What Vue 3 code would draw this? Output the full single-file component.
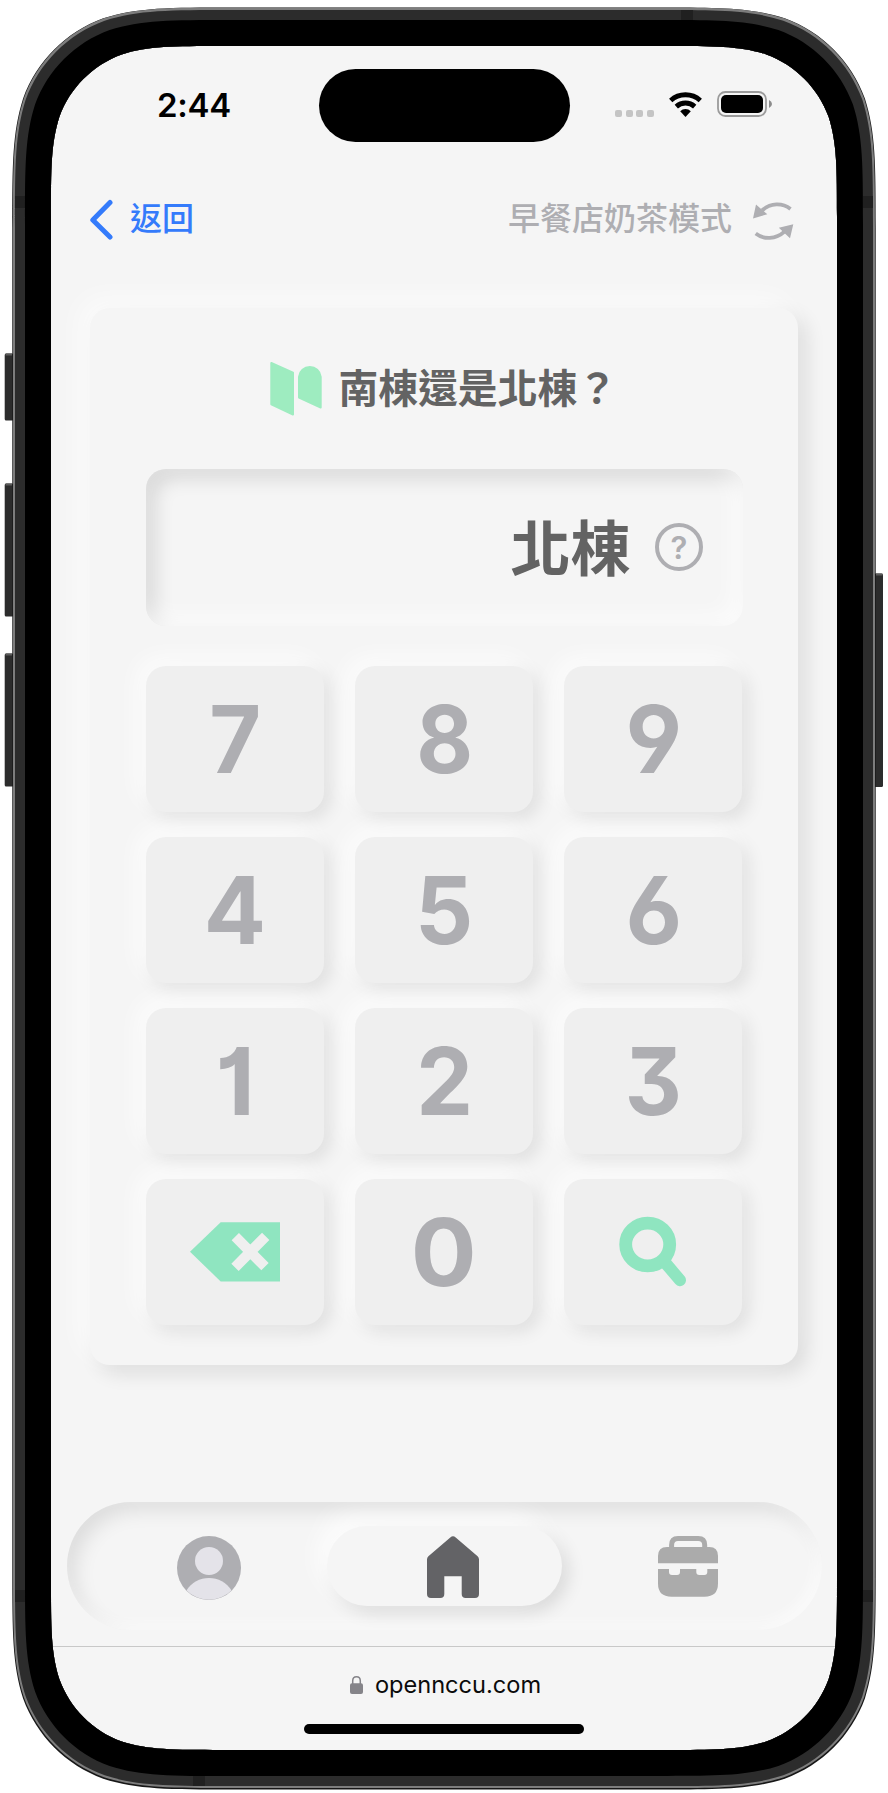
<script setup>
const keys = [
  { label: '7', stretch: 0.95 }, { label: '8', stretch: 0.93 }, { label: '9', stretch: 0.98 },
  { label: '4', stretch: 0.98 }, { label: '5', stretch: 0.97 }, { label: '6', stretch: 0.98 },
  { label: '1', stretch: 1 }, { label: '2', stretch: 0.96 }, { label: '3', stretch: 0.94 },
  { icon: 'erase' }, { label: '0', stretch: 1.04 }, { icon: 'search' },
]

// Continuous-curvature rounded rectangle
function squircle(x, y, w, h, r) {
  const a = 1.52866 * r, b = 1.08849 * r, c = 0.86841 * r, d = 0.63149 * r
  const e = 0.07491 * r, f = 0.37282 * r, g = 0.16906 * r
  const X = x + w, Y = y + h
  return `M${x + a} ${y}L${X - a} ${y}` +
    `C${X - b} ${y} ${X - c} ${y} ${X - d} ${y + e}C${X - f} ${y + g} ${X - g} ${y + f} ${X - e} ${y + d}C${X} ${y + c} ${X} ${y + b} ${X} ${y + a}` +
    `L${X} ${Y - a}C${X} ${Y - b} ${X} ${Y - c} ${X - e} ${Y - d}C${X - g} ${Y - f} ${X - f} ${Y - g} ${X - d} ${Y - e}C${X - c} ${Y} ${X - b} ${Y} ${X - a} ${Y}` +
    `L${x + a} ${Y}C${x + b} ${Y} ${x + c} ${Y} ${x + d} ${Y - e}C${x + f} ${Y - g} ${x + g} ${Y - f} ${x + e} ${Y - d}C${x} ${Y - c} ${x} ${Y - b} ${x} ${Y - a}` +
    `L${x} ${y + a}C${x} ${y + b} ${x} ${y + c} ${x + e} ${y + d}C${x + g} ${y + f} ${x + f} ${y + g} ${x + d} ${y + e}C${x + c} ${y} ${x + b} ${y} ${x + a} ${y}Z`
}
const hole = squircle(51, 46, 786, 1704, 112)
const black = squircle(25, 20, 838, 1756, 134)
const band = squircle(15, 10, 858, 1776, 142)
const rim = squircle(13, 7.5, 862, 1780.5, 144)
const edge = squircle(12.3, 7.5, 863.4, 1782, 144)
</script>

<template>
  <div class="stage">
    <main class="screen">
      <header class="status">
        <span class="time">2:44</span>
        <span class="island"></span>
        <span class="signals">
          <span class="dots"><i></i><i></i><i></i><i></i></span>
          <svg class="wifi" width="33" height="25" viewBox="0 0 33 25">
            <g fill="none" stroke="#000" stroke-width="4.9">
              <path d="M1.7 8.5A22 22 0 0 1 31.3 8.5" />
              <path d="M7.3 14.6A13.7 13.7 0 0 1 25.7 14.6" />
            </g>
            <path d="M16.5 25L11.2 19.2A7.7 7.7 0 0 1 21.8 19.2Z" />
          </svg>
          <svg width="56" height="26" viewBox="0 0 56 26">
            <rect x="1" y="1" width="48" height="24" rx="7.5" fill="none" stroke="#9b9b9b" stroke-width="1.8" />
            <rect x="4" y="4" width="42" height="18" rx="5" />
            <path d="M52 9Q55 10.500 55 13T52 17Z" fill="#8c8c8c" />
          </svg>
        </span>
      </header>

      <nav class="bar">
        <a class="back">
          <svg width="25" height="42" viewBox="0 0 25 42">
            <path d="M21 3.500L3.800 21L21 38" fill="none" stroke="#347bfb" stroke-width="5" stroke-linecap="round" stroke-linejoin="round" />
          </svg>
          <span>返回</span>
        </a>
        <a class="mode">
          <span>早餐店奶茶模式</span>
          <svg width="41" height="39" viewBox="0 0 41 39">
            <g fill="none" stroke="#aeaeb2" stroke-width="3.800">
              <path d="M37.500 7C29.500 .8 17.500 .6 9 8.500" />
              <path d="M2.700 31.600C10.700 37.800 22.700 37.600 31.500 29.700" />
            </g>
            <path d="M0 16.500L3 2.500L14.300 12.300ZM40.300 22.300L37 36.200L25.800 25.700Z" fill="#aeaeb2" />
          </svg>
        </a>
      </nav>

      <section class="card">
        <h1 class="title">
          <svg width="52" height="54" viewBox="0 0 52 54">
            <g fill="#9eecc0" stroke="#9eecc0" stroke-width="2" stroke-linejoin="round">
              <path d="M1.300 1L23 10.700V52.500L1.300 42.300Z" />
              <path d="M29 14.800A10.900 10.900 0 0 1 50.700 14.800V45.500L29 35.600Z" />
            </g>
          </svg>
          <span>南棟還是北棟？</span>
        </h1>
        <div class="display">
          <strong>北棟</strong>
          <svg width="48" height="48" viewBox="0 0 48 48">
            <circle cx="24" cy="24" r="22" fill="none" stroke="#aeaeb2" stroke-width="4" />
            <text class="q" x="24" y="35.500" text-anchor="middle">?</text>
          </svg>
        </div>
        <div class="pad">
          <button v-for="(k, i) in keys" :key="i" class="key">
            <span v-if="k.label" :style="{ transform: `scaleX(${k.stretch})` }">{{ k.label }}</span>
            <svg v-else-if="k.icon === 'erase'" width="90" height="60" viewBox="0 0 90 60">
              <path d="M0 29.700L30.700 .3H90V59.500H30.700Z" fill="#8fe5c0" />
              <path d="M45.300 14.700L75 44.700M75.700 14.300L45 45.300" stroke="#efefef" stroke-width="10.300" />
            </svg>
            <svg v-else width="68" height="72" viewBox="0 0 68 72">
              <ellipse cx="28.700" cy="28.500" rx="22" ry="21.300" fill="none" stroke="#8fe5c0" stroke-width="12.800" />
              <path d="M46 46.500L61 64.200" stroke="#8fe5c0" stroke-width="12" stroke-linecap="round" />
            </svg>
          </button>
        </div>
      </section>

      <nav class="tabs">
        <a class="tab">
          <svg width="64" height="64" viewBox="0 0 64 64">
            <circle cx="32" cy="32" r="32" fill="#aeaeb2" />
            <circle cx="32" cy="25" r="14" fill="#e4e3e9" />
            <path d="M9.500 54.500A26.500 26.500 0 0 1 54.500 54.500A32 32 0 0 1 9.500 54.500Z" fill="#e4e3e9" />
          </svg>
        </a>
        <a class="tab active">
          <svg class="house" width="52" height="62" viewBox="0 0 52 62">
            <path d="M23.300 1.400Q26 -.7 28.700 1.400L50.600 20.200Q52 21.500 52 23.500V58Q52 62 48 62H38.700Q34.700 62 34.700 58V40.200H17.300V58Q17.300 62 13.300 62H4Q0 62 0 58V23.500Q0 21.500 1.400 20.200Z" fill="#636366" />
          </svg>
        </a>
        <a class="tab">
          <svg class="case" width="60" height="61" viewBox="0 0 60 61">
            <path d="M13.600 13V9Q13.600 2.500 20 2.500H40.200Q46.700 2.500 46.700 9V13" fill="none" stroke="#ababab" stroke-width="5" />
            <path d="M0 27.300V20Q0 11 9 11H51.300Q60 11 60 20V27.300Z" fill="#ababab" />
            <path d="M0 33H11V36Q11 39 14 39H19Q22 39 22 36V33H38.300V36Q38.300 39 41.300 39H46.300Q49.300 39 49.300 36V33H60V47.500Q60 60.700 46.500 60.700H13.500Q0 60.700 0 47.500Z" fill="#ababab" />
          </svg>
        </a>
      </nav>

      <footer class="address">
        <p>
          <svg width="13" height="18" viewBox="0 0 13 18">
            <rect y="7.300" width="13" height="10.700" rx="2" fill="#858489" />
            <path d="M2.700 8V5Q2.700 .8 6.500 .8T10.300 5V8" fill="none" stroke="#858489" stroke-width="1.500" />
          </svg>
          <span>opennccu.com</span>
        </p>
        <span class="indicator"></span>
      </footer>
    </main>

    <svg class="frame" width="888" height="1793" viewBox="0 0 888 1793">
      <g fill="#2c2c2c">
        <rect x="4.700" y="353.500" width="9" height="67" rx="1.500" />
        <rect x="4.700" y="483.500" width="9" height="133" rx="1.500" />
        <rect x="4.700" y="653.500" width="9" height="133" rx="1.500" />
        <rect x="874" y="573.500" width="9" height="213.500" rx="1.500" />
      </g>
      <path d="M5.500 354.500H12M5.500 484.500H12M5.500 654.500H12M876 574.500H882.500" stroke="#5c5c5c" stroke-width="2" />
      <path :d="edge + hole" fill="#171717" fill-rule="evenodd" />
      <path :d="rim + hole" fill="#7d7d7d" fill-rule="evenodd" />
      <path :d="band + hole" fill="#2c2c2c" fill-rule="evenodd" />
      <path d="M15 196h10v12h-10zM863 196h10v12h-10zM681 10h12v10h-12zM15 1590h10v12h-10zM863 1590h10v12h-10zM193 1776h12v10h-12z" fill="#202020" />
      <path :d="black + hole" fill="#000" fill-rule="evenodd" />
    </svg>
  </div>
</template>

<style>
body { margin: 0; background: #fff; }
</style>

<style scoped>
.stage {
  position: relative;
  width: 888px;
  height: 1793px;
  box-sizing: border-box;
  padding: 46px 51px 43px;
  overflow: hidden;
  background: #fff;
}
.screen {
  display: flex;
  flex-direction: column;
  width: 786px;
  height: 1704px;
  border-radius: 92px;
  overflow: hidden;
  background: #f5f5f5;
  font-family: Inter, "Noto Sans CJK TC", sans-serif;
}
.frame {
  position: absolute;
  left: 0;
  top: 0;
  pointer-events: none;
}
svg { display: block; flex: none; }

.status {
  display: grid;
  grid-template-columns: 268px 250.500px 1fr;
  height: 118px;
  padding-top: 22.5px;
  box-sizing: border-box;
}
.time {
  padding: 14px 0 0 106px;
  font-size: 33px;
  line-height: 44px;
  font-weight: 600;
  letter-spacing: -0.3px;
}
.island { height: 73.5px; border-radius: 37px; background: #000; }
.signals { display: flex; padding: 22.5px 0 0 45.500px; align-items: flex-start; }
.dots { display: flex; gap: 3.7px; padding-top: 19px; margin-right: 15px; }
.dots i { width: 7px; height: 7px; border-radius: 2px; background: #c4c4c4; }
.wifi { margin: 1px 15px 0 0; }

.bar {
  display: flex;
  justify-content: space-between;
  align-items: center;
  height: 112px;
  padding: 0 43px 0 38px;
  font-size: 32px;
  line-height: 46px;
}
.back, .mode { display: flex; align-items: center; font-weight: 500; }
.back { color: #347bfb; gap: 16px; }
.mode { color: #aeaeb2; gap: 21px; }
.mode svg { margin-top: 2px; }
.bar span { position: relative; top: -1px; }

.card {
  width: 708px;
  height: 1057px;
  box-sizing: border-box;
  margin: 32px 0 0 39px;
  padding: 0 55.500px 40px 56px;
  border-radius: 20px;
  background: #f5f5f5;
  box-shadow: -10px -10px 28px rgba(255, 255, 255, 0.65), 8px 8px 20px rgba(0, 0, 0, 0.11);
}
.title {
  display: flex;
  align-items: center;
  justify-content: center;
  gap: 16px;
  height: 161px;
  margin: 0;
  font-size: 39.8px;
  font-weight: 700;
  color: #636363;
  padding-right: 1px;
  box-sizing: border-box;
}
.title svg { margin-top: 1px; }
.title span { position: relative; top: -3.500px; }
.display {
  display: flex;
  align-items: center;
  justify-content: flex-end;
  gap: 24px;
  height: 157px;
  box-sizing: border-box;
  padding-right: 40px;
  border-radius: 20px;
  background: #f5f5f5;
  color: #636363;
  box-shadow: inset -8px -8px 24px rgba(255, 255, 255, 0.75), inset 8px 8px 20px rgba(0, 0, 0, 0.14);
}
.display svg { margin-top: -1px; }
.display strong { font-size: 60px; line-height: 80px; font-weight: 700; position: relative; top: 1px; }
.q { font: 600 31px Inter, sans-serif; fill: #aeaeb2; }
.pad {
  display: grid;
  grid-template-columns: repeat(3, 178px);
  grid-auto-rows: 146.400px;
  gap: 24.600px 31.200px;
  margin-top: 40px;
}
.key {
  display: flex;
  align-items: center;
  justify-content: center;
  border: 0;
  padding: 0;
  border-radius: 20px;
  background: #efefef;
  color: #aeaeb2;
  font: 750 94px/146px Inter, sans-serif;
  font-feature-settings: "cv01", "cv03", "cv04", "cv09";
  box-shadow: -8px -8px 24px rgba(255, 255, 255, 0.8), 6px 6px 18px rgba(0, 0, 0, 0.1);
}

.tabs {
  display: grid;
  grid-template-columns: 259.500px 235.500px 1fr;
  align-items: center;
  width: 754.500px;
  height: 128px;
  margin: 137px 0 0 16px;
  border-radius: 64px;
  box-shadow: inset -6px -6px 14px rgba(255, 255, 255, 0.6), inset 8px 8px 20px rgba(0, 0, 0, 0.1);
}
.tab { display: flex; align-items: center; justify-content: center; height: 80px; }
.tab:first-child { padding-left: 24.500px; }
.tab:first-child svg { margin-top: 3px; }
.case { margin: 1px 8px 0 0; }
.active {
  border-radius: 40px;
  background: #f5f5f5;
  box-shadow: -10px -10px 24px rgba(255, 255, 255, 0.8), 6px 6px 18px rgba(0, 0, 0, 0.12);
}
.house { margin: 1px 0 0 17px; }

.address {
  display: flex;
  flex-direction: column;
  align-items: center;
  height: 104px;
  margin-top: auto;
  border-top: 1px solid #c8c8c8;
  box-sizing: border-box;
}
.address p {
  display: flex;
  align-items: center;
  gap: 12px;
  margin: 23px 0 0 3px;
  font-size: 23.600px;
  line-height: 30px;
  color: #0b0b0b;
}
.address p svg { margin-top: -1px; }
.indicator { width: 280px; height: 10px; margin-top: 24px; border-radius: 5px; background: #000; }
</style>
